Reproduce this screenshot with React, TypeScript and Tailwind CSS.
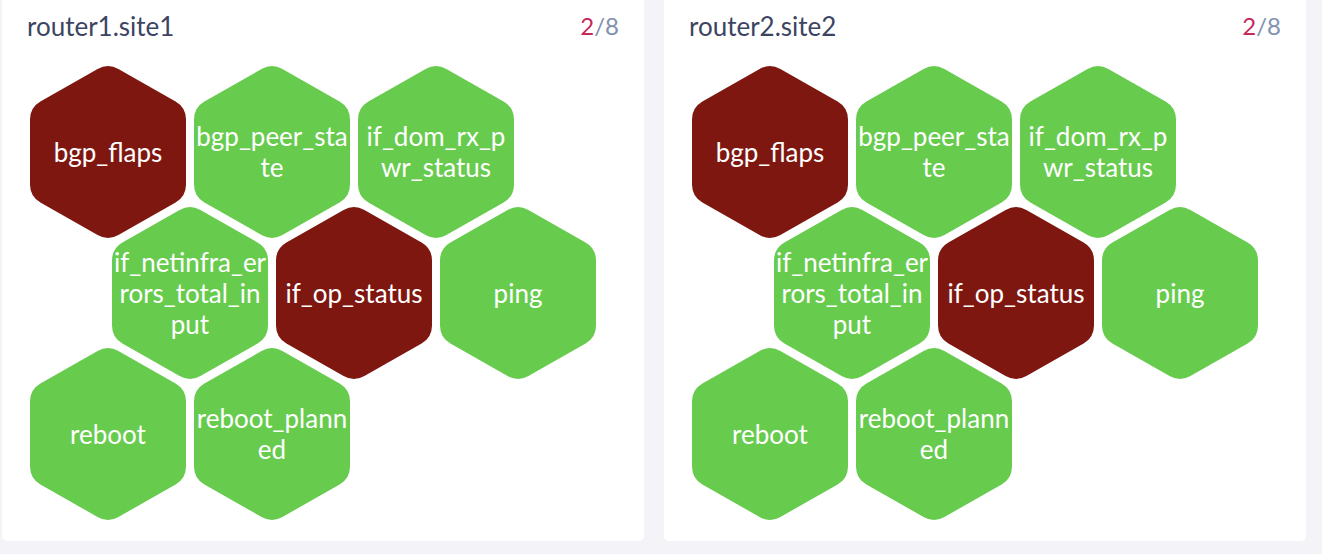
import React from 'react';

type Check = { lines: string[]; failing: boolean };

const checks: Check[][] = [
  [
    { lines: ['bgp_flaps'], failing: true },
    { lines: ['bgp_peer_sta', 'te'], failing: false },
    { lines: ['if_dom_rx_p', 'wr_status'], failing: false },
  ],
  [
    { lines: ['if_netinfra_er', 'rors_total_in', 'put'], failing: false },
    { lines: ['if_op_status'], failing: true },
    { lines: ['ping'], failing: false },
  ],
  [
    { lines: ['reboot'], failing: false },
    { lines: ['reboot_plann', 'ed'], failing: false },
  ],
];

// rounded pointy-top hexagon, 156 x 178
const HEX_PATH =
  'M 88.4 6 L 145.6 38.5 Q 156 44.5 156 56.5 L 156 121.5 Q 156 133.5 145.6 139.5 L 88.4 172 Q 78 178 67.6 172 L 10.4 139.5 Q 0 133.5 0 121.5 L 0 56.5 Q 0 44.5 10.4 38.5 L 67.6 6 Q 78 0 88.4 6 Z';

function Hex({ check }: { check: Check }) {
  return (
    <div className="relative w-[156px] h-[178px] shrink-0">
      <svg width="156" height="178" viewBox="0 0 156 178" className="absolute inset-0">
        <path d={HEX_PATH} fill={check.failing ? '#7e1710' : '#67cb4e'} />
      </svg>
      <div className="absolute inset-0 flex flex-col items-center justify-center text-white text-[26px] leading-[31px] whitespace-nowrap">
        {check.lines.map((l) => (
          <span key={l}>{l}</span>
        ))}
      </div>
    </div>
  );
}

function HostCard({ name }: { name: string }) {
  return (
    <div className="w-[642px] h-[541px] bg-white rounded-b-[5px] px-[25px] pt-[10px]">
      <div className="flex items-start justify-between leading-[32px]">
        <span className="text-[#3c4462] text-[26px]">{name}</span>
        <span className="text-[24px]">
          <span className="text-[#c62a5b]">2</span>
          <span className="text-[#8291b0]">/8</span>
        </span>
      </div>
      <div className="mt-[21px] pl-[3px]">
        {checks.map((row, i) => (
          <div
            key={i}
            className={
              'flex gap-[8px] ' + (i === 1 ? 'ml-[82px] -mt-[37px]' : i === 2 ? '-mt-[37px]' : '')
            }
          >
            {row.map((c) => (
              <Hex key={c.lines.join('')} check={c} />
            ))}
          </div>
        ))}
      </div>
    </div>
  );
}

export default function App() {
  return (
    <div
      className="w-[1322px] h-[554px] bg-[#f4f4f8] pl-[2px] flex gap-[20px]"
      style={{ fontFamily: '"Source Sans Pro", Lato, "Noto Sans", sans-serif' }}
    >
      <HostCard name="router1.site1" />
      <HostCard name="router2.site2" />
    </div>
  );
}
